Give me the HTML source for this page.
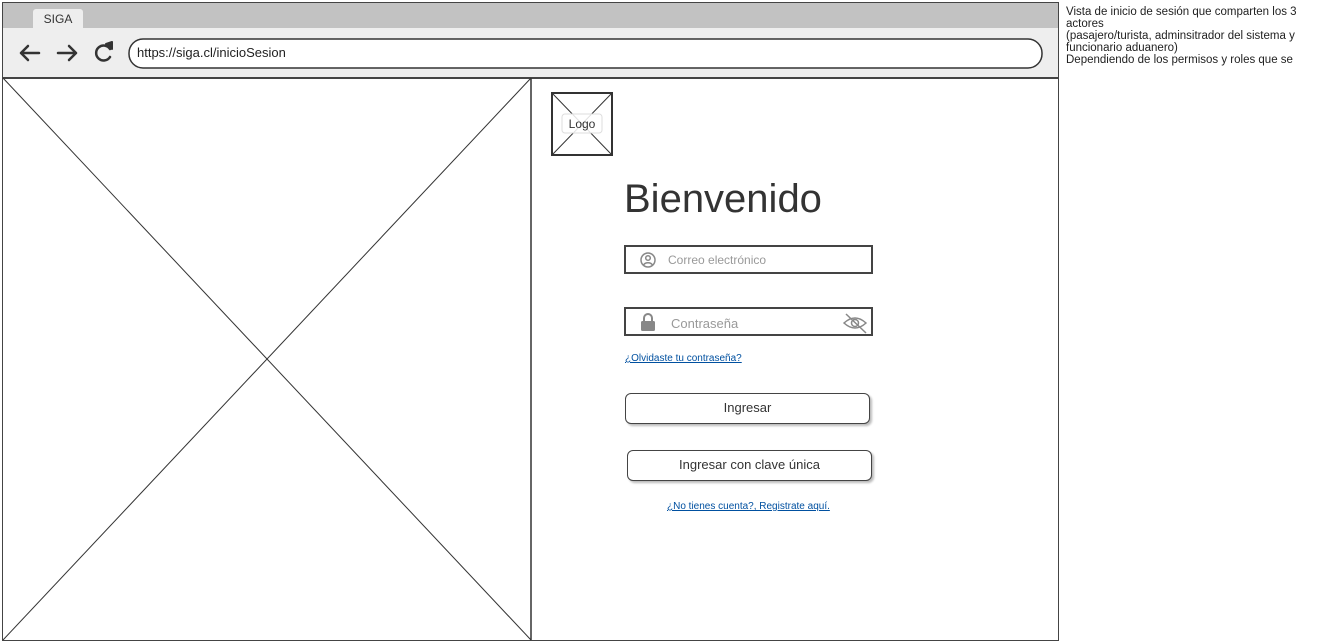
<!DOCTYPE html>
<html><head><meta charset="utf-8"><style>
body{margin:0;width:1344px;height:643px;background:#fff;position:relative;overflow:hidden;font-family:"Liberation Sans",sans-serif;color:#333}
.a{position:absolute}
.inp{position:absolute;border:2px solid #444;box-sizing:border-box;background:transparent}
.btn{position:absolute;border:1.5px solid #444;border-radius:6px;box-sizing:border-box;background:#fff;box-shadow:2px 2px 2px #bbb;text-align:center;font-size:13px;color:#333}
a{color:#0050a0;text-decoration:underline;font-size:10px}
</style></head><body>
<div class="a" style="left:3px;top:3px;width:1055px;height:25px;background:#c2c2c2"></div>
<div class="a" style="left:33px;top:9px;width:50px;height:19px;background:#eee;border-radius:3px 3px 0 0;font-size:12px;line-height:21px;text-align:center">SIGA</div>
<div class="a" style="left:3px;top:28px;width:1055px;height:49px;background:#eee"></div>
<div class="a" style="left:2px;top:2px;width:1055px;height:637px;border:1.5px solid #444"></div>
<div class="a" style="left:3px;top:77px;width:1055px;height:1.5px;background:#444"></div>
<div class="inp" style="left:624px;top:245px;width:249px;height:29px"></div>
<div class="inp" style="left:624px;top:307px;width:249px;height:29px"></div>
<svg class="a" style="left:0;top:0" width="1344" height="643">
<g stroke="#333" stroke-width="2.5" fill="none" stroke-linecap="round">
<path d="M21 53h18M21 53l7-7M21 53l7 7"/>
<path d="M58 53h18M76 53l-7-7M76 53l-7 7"/>
<path d="M110 49a7.5 7.5 0 1 0 0 8"/>
</g>
<path d="M106 44l6-2v7z" fill="#333" stroke="#333" stroke-width="2" stroke-linejoin="round"/>
<rect x="129" y="39" width="913" height="29" rx="14" fill="#fff" stroke="#333" stroke-width="1.5"/>
<line x1="531" y1="78" x2="531" y2="640" stroke="#333" stroke-width="1.5"/>
<g stroke="#333" stroke-width="1">
<line x1="3" y1="78" x2="531" y2="640"/><line x1="531" y1="78" x2="3" y2="640"/>
<rect x="552" y="93" width="60" height="62" fill="none" stroke-width="2"/>
<line x1="552" y1="93" x2="612" y2="155"/><line x1="612" y1="93" x2="552" y2="155"/>
</g>
<rect x="562" y="114" width="40" height="19" rx="3" fill="#fff" fill-opacity=".85" stroke="#ddd"/>
<text x="582" y="128" font-size="12" text-anchor="middle" fill="#333" font-family="Liberation Sans">Logo</text>
<g fill="none" stroke="#888" stroke-width="1.5">
<circle cx="648" cy="260" r="7"/><circle cx="648" cy="258" r="2.3"/><path d="M643.5 265a5 4 0 0 1 9 0"/>
</g>
<rect x="641" y="321" width="14" height="10" rx="1.5" fill="#888"/><path d="M644 321v-3a4 4 0 0 1 8 0v3" fill="none" stroke="#888" stroke-width="2"/>
<g fill="none" stroke="#888" stroke-width="1.5"><path d="M844 323q11-10 22 0q-11 10-22 0z"/><circle cx="855" cy="323" r="3.5"/><line x1="846" y1="314" x2="866" y2="333"/></g>
</svg>
<div class="a" style="left:137px;top:45px;font-size:13px;color:#222">https://siga.cl/inicioSesion</div>
<div class="a" style="left:624px;top:177px;font-size:40px;color:#333">Bienvenido</div>
<div class="a" style="left:668px;top:253px;font-size:12px;color:#999">Correo electrónico</div>
<div class="a" style="left:671px;top:316px;font-size:13px;color:#999">Contraseña</div>
<a class="a" style="left:625px;top:353px">¿Olvidaste tu contraseña?</a>
<div class="btn" style="left:625px;top:393px;width:245px;height:31px;line-height:28px">Ingresar</div>
<div class="btn" style="left:627px;top:450px;width:245px;height:31px;line-height:28px">Ingresar con clave única</div>
<a class="a" style="left:667px;top:501px">¿No tienes cuenta?, Registrate aquí.</a>
<div class="a" style="left:1066px;top:6px;white-space:nowrap;font-size:11.5px;line-height:12px;color:#222">Vista de inicio de sesión que comparten los 3<br>actores<br>(pasajero/turista, adminsitrador del sistema y<br>funcionario aduanero)<br>Dependiendo de los permisos y roles que se</div>
</body></html>
